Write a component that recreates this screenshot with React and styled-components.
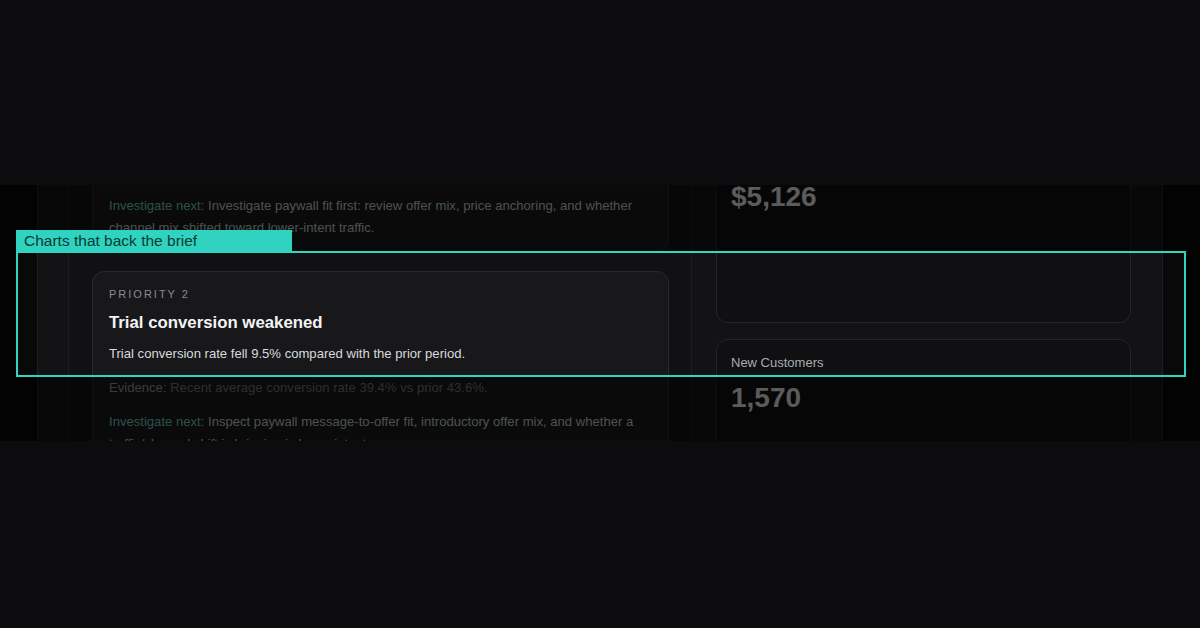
import styled, { createGlobalStyle } from 'styled-components'

const GlobalStyle = createGlobalStyle`
  html, body {
    margin: 0;
    background: #0c0c0e;
  }
  body {
    font-family: "Liberation Sans", Arial, Helvetica, sans-serif;
  }
`

const Stage = styled.div`
  width: 1200px;
  height: 628px;
  padding-top: 185px;
  box-sizing: border-box;
  background: #0c0c0e;
`

const Viewport = styled.div`
  position: relative;
  height: 256px;
  overflow: hidden;
  background: #09090a;
`

const Shell = styled.div`
  margin: 0 37px;
  height: 100%;
  box-sizing: border-box;
  background: #131315;
  border-left: 1px solid #1f1f22;
  border-right: 1px solid #1f1f22;
  padding: 0 31px 0 30px;
  display: grid;
  grid-template-columns: 624px 415px;
  column-gap: 24px;
`

const BriefPanel = styled.div`
  background: #111113;
  border-left: 1px solid #1e1e21;
  border-right: 1px solid #1e1e21;
  padding: 0 22px 0 23px;
  display: flex;
  flex-direction: column;
  gap: 19px;
`

const PriorityCard = styled.section`
  background: #18181a;
  border: 1px solid #2a2a2d;
  border-radius: 12px;
  padding: 15px 16px 12px;
  display: flex;
  flex-direction: column;
  ${p => p.$clipped && `
    border-top: none;
    border-radius: 0 0 12px 12px;
    padding-top: 10px;
  `}
`

const Eyebrow = styled.div`
  font-size: 11px;
  line-height: 14px;
  letter-spacing: 2px;
  text-transform: uppercase;
  color: #8b8b8f;
`

const CardTitle = styled.h3`
  margin: 12px 0 0;
  font-size: 16.8px;
  line-height: 20px;
  font-weight: 700;
  color: #f4f4f5;
`

const Summary = styled.p`
  margin: 10px 0 0;
  font-size: 13.1px;
  line-height: 22px;
  color: #dadadd;
`

const Detail = styled.p`
  margin: ${p => (p.$first ? '0' : '12px 0 0')};
  font-size: 13.1px;
  line-height: 22px;
  color: ${p => (p.$next ? '#b3c2bf' : '#6d6d72')};
`

const DetailLabel = styled.span`
  color: ${p => (p.$next ? '#6cbfae' : '#8d8d92')};
`

const StatColumn = styled.div`
  display: flex;
  flex-direction: column;
  gap: 16px;
`

const StatCard = styled.div`
  background: #101012;
  border: 1px solid #252528;
  border-radius: 12px;
  padding: 15px 14px 16px;
  ${p => p.$clipped && `
    border-top: none;
    border-radius: 0 0 12px 12px;
    padding-top: 0;
  `}
`

const StatLabel = styled.div`
  font-size: 13px;
  line-height: 16px;
  color: #ababb0;
  margin-bottom: 15px;
`

const StatValue = styled.div`
  font-size: 28px;
  line-height: 24px;
  font-weight: 700;
  color: #d8d8da;
`

const ChartSlot = styled.div`
  height: 97px;
`

const Spotlight = styled.div`
  position: absolute;
  left: 16px;
  top: 66px;
  width: 1170px;
  height: 126px;
  box-sizing: border-box;
  border: 2px solid #33d4c0;
  box-shadow: 0 0 0 1600px rgba(0, 0, 0, 0.58);
  z-index: 2;
`

const SpotlightTag = styled.div`
  position: absolute;
  left: 16px;
  top: 45px;
  width: 276px;
  height: 22px;
  box-sizing: border-box;
  padding-left: 8px;
  background: #2fd3bf;
  color: #0b3a34;
  font-size: 15.5px;
  line-height: 21px;
  white-space: nowrap;
  z-index: 3;
`

const priorities = [
  {
    clipped: true,
    next: 'Investigate paywall fit first: review offer mix, price anchoring, and whether channel mix shifted toward lower-intent traffic.',
  },
  {
    rank: 2,
    title: 'Trial conversion weakened',
    summary: 'Trial conversion rate fell 9.5% compared with the prior period.',
    evidence: 'Recent average conversion rate 39.4% vs prior 43.6%.',
    next: 'Inspect paywall message-to-offer fit, introductory offer mix, and whether a traffic/channel shift is bringing in lower-intent users.',
  },
]

const App = () => {
  return (
    <>
      <GlobalStyle />
      <Stage>
        <Viewport>
          <Shell>
            <BriefPanel>
              {priorities.map((item, i) => (
                <PriorityCard key={i} $clipped={item.clipped}>
                  {item.rank && <Eyebrow>Priority {item.rank}</Eyebrow>}
                  {item.title && <CardTitle>{item.title}</CardTitle>}
                  {item.summary && <Summary>{item.summary}</Summary>}
                  {item.evidence && (
                    <Detail>
                      <DetailLabel>Evidence:</DetailLabel> {item.evidence}
                    </Detail>
                  )}
                  <Detail $next $first={item.clipped}>
                    <DetailLabel $next>Investigate next:</DetailLabel> {item.next}
                  </Detail>
                </PriorityCard>
              ))}
            </BriefPanel>
            <StatColumn>
              <StatCard $clipped>
                <StatValue>$5,126</StatValue>
                <ChartSlot />
              </StatCard>
              <StatCard>
                <StatLabel>New Customers</StatLabel>
                <StatValue>1,570</StatValue>
                <ChartSlot />
              </StatCard>
            </StatColumn>
          </Shell>
          <Spotlight />
          <SpotlightTag>Charts that back the brief</SpotlightTag>
        </Viewport>
      </Stage>
    </>
  )
}

export default App
